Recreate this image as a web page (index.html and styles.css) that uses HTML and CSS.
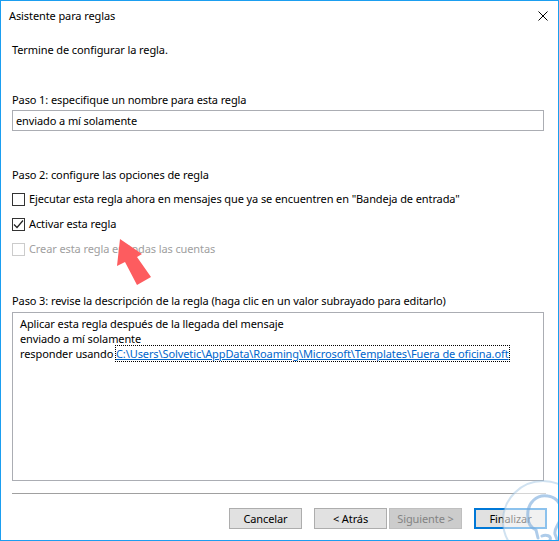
FILE: index.html
```html
<!DOCTYPE html>
<html lang="es">
<head>
<meta charset="utf-8">
<title>Asistente para reglas</title>
<link rel="stylesheet" href="styles.css">
</head>
<body>
<div class="window">
  <div class="titlebar">
    <span class="title">Asistente para reglas</span>
    <svg class="close" width="10" height="10" viewBox="0 0 10 10"><path d="M0.5 0.5 L9.5 9.5 M9.5 0.5 L0.5 9.5" stroke="#000" stroke-width="1"/></svg>
  </div>
  <div class="content">
    <div class="intro">Termine de configurar la regla.</div>

    <div class="label step1">Paso 1: especifique un nombre para esta regla</div>
    <div class="input">enviado a mí solamente</div>

    <div class="label step2">Paso 2: configure las opciones de regla</div>
    <div class="options">
      <div class="opt"><span class="cb"></span><span>Ejecutar esta regla ahora en mensajes que ya se encuentren en "Bandeja de entrada"</span></div>
      <div class="opt"><span class="cb checked"><svg width="11" height="11" viewBox="0 0 11 11"><path d="M1 5.5 L4 8.5 L10 1.5" fill="none" stroke="#222" stroke-width="1.2"/></svg></span><span>Activar esta regla</span></div>
      <div class="opt disabled"><span class="cb"></span><span>Crear esta regla en todas las cuentas</span></div>
    </div>

    <div class="label step3">Paso 3: revise la descripción de la regla (haga clic en un valor subrayado para editarlo)</div>
    <div class="desc">
      <div>Aplicar esta regla después de la llegada del mensaje</div>
      <div>enviado a mí solamente</div>
      <div>responder usando <span class="link">C:\Users\Solvetic\AppData\Roaming\Microsoft\Templates\Fuera de oficina.oft</span></div>
    </div>

    <div class="sep"></div>

    <div class="buttons">
      <span class="btn cancel">Cancelar</span>
      <span class="pair">
        <span class="btn">&lt; Atrás</span>
        <span class="btn off">Siguiente &gt;</span>
      </span>
      <span class="btn primary">Finalizar</span>
    </div>
  </div>

  <svg class="arrow" width="40" height="52" viewBox="0 0 40 52">
    <polygon points="4,1 26,16 21,19 35,39 21,47 9,24 1,28" fill="#fd5c5f"/>
  </svg>

  <svg class="mark" width="90" height="90" viewBox="0 0 90 90">
    <circle cx="45" cy="45" r="40" fill="rgba(255,255,255,0.55)" stroke="rgba(150,190,225,0.45)" stroke-width="2"/>
    <path d="M30 42 C28 26 40 18 50 20 C62 22 66 34 62 44 C60 50 56 52 57 58 L60 66 M30 42 C30 48 34 52 38 54 L40 62 M44 60 C48 58 54 60 52 64" fill="none" stroke="rgba(120,170,220,0.6)" stroke-width="3" stroke-linecap="round"/>
  </svg>
</div>
</body>
</html>
```
FILE: styles.css
```css
html, body {
  margin: 0;
  padding: 0;
  background: #fff;
}
body {
  font-family: "Noto Sans", "Liberation Sans", sans-serif;
  font-size: 11px;
  letter-spacing: -0.1px;
  color: #000;
}
.window {
  position: relative;
  width: 559px;
  height: 541px;
  box-sizing: border-box;
  border: 1px solid #1b9ef0;
  background: #fff;
  overflow: hidden;
}
.titlebar {
  height: 29px;
  display: flex;
  align-items: center;
  justify-content: space-between;
  padding: 0 10px 0 8px;
}
.title {
  line-height: 16px;
}
.close {
  display: block;
}
.content {
  padding: 0 11px;
}
.intro, .label, .opt {
  line-height: 16px;
  height: 16px;
  white-space: nowrap;
}
.intro {
  margin-top: 12px;
}
.step1 {
  margin-top: 34px;
}
.input {
  margin-top: 2px;
  height: 21px;
  box-sizing: border-box;
  border: 1px solid #abadb3;
  padding: 0 3px;
  line-height: 19px;
  width: 532px;
}
.step2 {
  margin-top: 36px;
}
.options {
  margin-top: 8px;
  display: flex;
  flex-direction: column;
  gap: 9px;
}
.opt {
  display: flex;
  align-items: center;
  gap: 4px;
}
.cb {
  width: 13px;
  height: 13px;
  box-sizing: border-box;
  border: 1px solid #333;
  background: #fff;
  display: flex;
  align-items: center;
  justify-content: center;
  flex: none;
}
.opt.disabled {
  color: #a0a0a0;
}
.opt.disabled .cb {
  border-color: #cccccc;
}
.step3 {
  margin-top: 36px;
}
.desc {
  margin-top: 3px;
  width: 532px;
  height: 169px;
  box-sizing: border-box;
  border: 1px solid #abadb3;
  padding: 3px 7px;
  line-height: 15px;
  white-space: nowrap;
}
.link {
  color: #0066cc;
  text-decoration: underline;
  outline: 1px dotted #000;
  outline-offset: 0;
}
.sep {
  margin-top: 12px;
  height: 1px;
  background: #a0a0a0;
  width: 534px;
}
.buttons {
  margin-top: 14px;
  display: flex;
  justify-content: flex-end;
  gap: 12px;
}
.pair {
  display: flex;
  gap: 2px;
}
.btn {
  height: 21px;
  width: 73px;
  box-sizing: border-box;
  border: 1px solid #adadad;
  background: #e1e1e1;
  display: flex;
  align-items: center;
  justify-content: center;
  white-space: nowrap;
}
.btn.off {
  background: #cccccc;
  border-color: #bfbfbf;
  color: #838383;
}
.btn.primary {
  border: 2px solid #0078d7;
}
.arrow {
  position: absolute;
  left: 115px;
  top: 237px;
}
.mark {
  position: absolute;
  left: 497px;
  top: 475px;
}
```
